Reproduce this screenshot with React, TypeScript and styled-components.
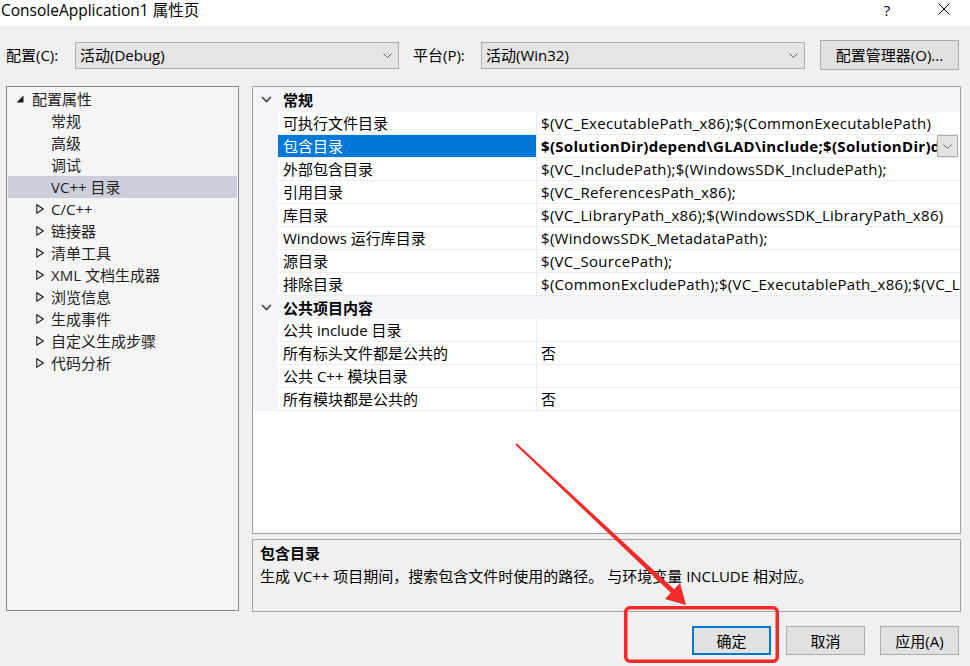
import React from 'react';
import styled, { createGlobalStyle } from 'styled-components';

const GlobalStyle = createGlobalStyle`
  html, body { margin: 0; padding: 0; }
  body {
    background: #f0f0f0;
    font-family: "Open Sans", "Noto Sans CJK SC", sans-serif;
    font-size: 15px;
    color: #000;
  }
  #root { width: 970px; height: 666px; overflow: hidden; }
`;

const Window = styled.div`
  position: relative;
  width: 970px;
  height: 666px;
  display: flex;
  flex-direction: column;
  background: #f0f0f0;
  overflow: hidden;
`;

const TitleBar = styled.div`
  height: 26px;
  flex-shrink: 0;
  background: #fff;
  display: flex;
  align-items: flex-start;
`;

const Title = styled.div`
  flex: 1;
  padding-left: 1px;
  font-size: 15.5px;
  line-height: 20px;
  white-space: nowrap;
`;

const Controls = styled.div`
  display: flex;
  gap: 11px;
  padding-right: 3px;
`;

const HelpGlyph = styled.div`
  width: 46px;
  text-align: center;
  font-size: 15px;
  line-height: 20px;
`;

const CloseGlyph = styled.div`
  width: 46px;
  height: 16px;
  display: flex;
  justify-content: center;
  align-items: center;
  padding-top: 1px;
`;

const ConfigRow = styled.div`
  display: flex;
  align-items: center;
  height: 30px;
  margin-top: 14px;
  padding-left: 6px;
`;

const FieldLabel = styled.div<{ $width: number; $gap?: number }>`
  width: ${p => p.$width}px;
  margin-left: ${p => p.$gap ?? 0}px;
  flex-shrink: 0;
  white-space: nowrap;
  line-height: 22px;
`;

const Combo = styled.div`
  width: 324px;
  height: 27px;
  box-sizing: border-box;
  border: 1px solid #adadad;
  background: #e5e5e5;
  display: flex;
  align-items: center;
  justify-content: space-between;
  padding: 0 6px 0 4px;
`;

const ComboText = styled.span`
  line-height: 22px;
`;

const PushButton = styled.div<{ $width: number; $height: number; $default?: boolean; $gap?: number }>`
  width: ${p => p.$width}px;
  height: ${p => p.$height}px;
  margin-left: ${p => p.$gap ?? 0}px;
  box-sizing: border-box;
  flex-shrink: 0;
  background: #e1e1e1;
  border: ${p => (p.$default ? '2px solid #0078d7' : '1px solid #adadad')};
  display: flex;
  align-items: center;
  justify-content: center;
  line-height: 22px;
  white-space: nowrap;
`;

const Main = styled.div`
  display: flex;
  margin-top: 16px;
  height: 526px;
  flex-shrink: 0;
`;

const Tree = styled.div`
  margin-left: 6px;
  width: 233px;
  height: 525px;
  box-sizing: border-box;
  border: 1px solid #828790;
  background: #f5f5f5;
  padding: 1px 1px 0 1px;
  color: #1e1e1e;
`;

const TreeRow = styled.div<{ $indent: number; $selected?: boolean }>`
  height: 22px;
  display: flex;
  align-items: center;
  padding-left: ${p => p.$indent}px;
  background: ${p => (p.$selected ? '#cccedb' : 'transparent')};
  white-space: nowrap;
`;

const TreeIcon = styled.span<{ $gap: number }>`
  display: inline-flex;
  width: 8px;
  margin-right: ${p => p.$gap}px;
  flex-shrink: 0;
`;

const TreeLabel = styled.span`
  line-height: 22px;
`;

const RightColumn = styled.div`
  margin-left: 13px;
  width: 709px;
  display: flex;
  flex-direction: column;
  gap: 5px;
`;

const Grid = styled.div`
  height: 448px;
  box-sizing: border-box;
  border: 1px solid #a0a0a0;
  background: #fff;
  overflow: hidden;
`;

const CategoryRow = styled.div<{ $first?: boolean }>`
  height: ${p => (p.$first ? 25 : 23)}px;
  display: grid;
  grid-template-columns: 25px 1fr;
  align-items: center;
  background: #f3f5f9;
`;

const CategoryChevron = styled.span`
  display: flex;
  justify-content: center;
  padding-left: 1px;
`;

const CategoryLabel = styled.span`
  padding-left: 5px;
  font-weight: 700;
  line-height: 22px;
`;

const PropRow = styled.div`
  height: 23px;
  display: grid;
  grid-template-columns: 25px 258px 1fr;
`;

const Gutter = styled.div`
  background: #f3f5f9;
`;

const NameCell = styled.div<{ $selected?: boolean }>`
  box-sizing: border-box;
  border-bottom: 1px solid #ededed;
  background: ${p => (p.$selected ? '#0078d7' : '#fff')};
  color: ${p => (p.$selected ? '#fff' : '#000')};
  padding-left: 5px;
  display: flex;
  align-items: center;
  white-space: nowrap;
  overflow: hidden;
  line-height: 22px;
`;

const ValueCell = styled.div<{ $bold?: boolean }>`
  box-sizing: border-box;
  border-bottom: 1px solid #ededed;
  border-left: 1px solid #ededed;
  display: flex;
  align-items: center;
  overflow: hidden;
  font-weight: ${p => (p.$bold ? 700 : 400)};
  min-width: 0;
`;

const ValueText = styled.span`
  flex: 1;
  min-width: 0;
  padding-left: 4px;
  white-space: nowrap;
  overflow: hidden;
  line-height: 22px;
  letter-spacing: 0.3px;
`;

const DropButton = styled.div`
  width: 21px;
  height: 22px;
  box-sizing: border-box;
  margin-right: 2px;
  flex-shrink: 0;
  background: #e3e3e3;
  border: 1px solid #adadad;
  display: flex;
  align-items: center;
  justify-content: center;
  align-self: flex-start;
`;

const Description = styled.div`
  height: 73px;
  box-sizing: border-box;
  border: 1px solid #a0a0a0;
  background: #f0f0f0;
  padding: 2px 7px 0 7px;
`;

const DescTitle = styled.div`
  font-weight: 700;
  line-height: 23px;
`;

const DescText = styled.div`
  line-height: 23px;
  white-space: nowrap;
`;

const ButtonRow = styled.div`
  display: flex;
  justify-content: flex-end;
  gap: 15px;
  margin-top: 14px;
  padding-right: 11px;
`;

const Annotation = styled.svg`
  position: absolute;
  left: 0;
  top: 0;
  width: 970px;
  height: 666px;
  pointer-events: none;
`;

const SmallChevron = () => (
  <svg width="9" height="5" viewBox="0 0 9 5">
    <polyline points="0.5,0.5 4.5,4.5 8.5,0.5" fill="none" stroke="#606060" strokeWidth="1" />
  </svg>
);

const CatChevron = () => (
  <svg width="11" height="7" viewBox="0 0 11 7">
    <polyline points="1,1 5.5,5.5 10,1" fill="none" stroke="#404040" strokeWidth="1.6" />
  </svg>
);

const ExpandedTri = () => (
  <svg width="8" height="8" viewBox="0 0 8 8">
    <polygon points="7.5,0.5 7.5,7.5 0.5,7.5" fill="#1e1e1e" />
  </svg>
);

const CollapsedTri = () => (
  <svg width="8" height="10" viewBox="0 0 8 10">
    <polygon points="0.8,0.8 7.2,5 0.8,9.2" fill="none" stroke="#1e1e1e" strokeWidth="1.1" />
  </svg>
);

type TreeItem = { label: string; kind: 'root' | 'leaf' | 'collapsed'; selected?: boolean };

const treeItems: TreeItem[] = [
  { label: '配置属性', kind: 'root' },
  { label: '常规', kind: 'leaf' },
  { label: '高级', kind: 'leaf' },
  { label: '调试', kind: 'leaf' },
  { label: 'VC++ 目录', kind: 'leaf', selected: true },
  { label: 'C/C++', kind: 'collapsed' },
  { label: '链接器', kind: 'collapsed' },
  { label: '清单工具', kind: 'collapsed' },
  { label: 'XML 文档生成器', kind: 'collapsed' },
  { label: '浏览信息', kind: 'collapsed' },
  { label: '生成事件', kind: 'collapsed' },
  { label: '自定义生成步骤', kind: 'collapsed' },
  { label: '代码分析', kind: 'collapsed' },
];

type Prop = { name: string; value: string; selected?: boolean };
type Category = { title: string; props: Prop[] };

const categories: Category[] = [
  {
    title: '常规',
    props: [
      { name: '可执行文件目录', value: '$(VC_ExecutablePath_x86);$(CommonExecutablePath)' },
      { name: '包含目录', value: '$(SolutionDir)depend\\GLAD\\include;$(SolutionDir)depend\\GLFW\\include;$(IncludePath)', selected: true },
      { name: '外部包含目录', value: '$(VC_IncludePath);$(WindowsSDK_IncludePath);' },
      { name: '引用目录', value: '$(VC_ReferencesPath_x86);' },
      { name: '库目录', value: '$(VC_LibraryPath_x86);$(WindowsSDK_LibraryPath_x86)' },
      { name: 'Windows 运行库目录', value: '$(WindowsSDK_MetadataPath);' },
      { name: '源目录', value: '$(VC_SourcePath);' },
      { name: '排除目录', value: '$(CommonExcludePath);$(VC_ExecutablePath_x86);$(VC_LibraryPath_x86)' },
    ],
  },
  {
    title: '公共项目内容',
    props: [
      { name: '公共 include 目录', value: '' },
      { name: '所有标头文件都是公共的', value: '否' },
      { name: '公共 C++ 模块目录', value: '' },
      { name: '所有模块都是公共的', value: '否' },
    ],
  },
];

export default function App() {
  return (
    <>
      <GlobalStyle />
      <Window>
        <TitleBar>
          <Title>ConsoleApplication1 属性页</Title>
          <Controls>
            <HelpGlyph>?</HelpGlyph>
            <CloseGlyph>
              <svg width="12" height="12" viewBox="0 0 12 12">
                <line x1="0.5" y1="0.5" x2="11.5" y2="11.5" stroke="#000" strokeWidth="1" />
                <line x1="11.5" y1="0.5" x2="0.5" y2="11.5" stroke="#000" strokeWidth="1" />
              </svg>
            </CloseGlyph>
          </Controls>
        </TitleBar>

        <ConfigRow>
          <FieldLabel $width={69}>配置(C):</FieldLabel>
          <Combo>
            <ComboText>活动(Debug)</ComboText>
            <SmallChevron />
          </Combo>
          <FieldLabel $width={68} $gap={14}>平台(P):</FieldLabel>
          <Combo>
            <ComboText>活动(Win32)</ComboText>
            <SmallChevron />
          </Combo>
          <PushButton $width={139} $height={30} $gap={15}>配置管理器(O)...</PushButton>
        </ConfigRow>

        <Main>
          <Tree>
            {treeItems.map(item => (
              <TreeRow
                key={item.label}
                $indent={item.kind === 'root' ? 8 : item.kind === 'collapsed' ? 28 : 43}
                $selected={item.selected}
              >
                {item.kind === 'root' && (
                  <TreeIcon $gap={8}>
                    <ExpandedTri />
                  </TreeIcon>
                )}
                {item.kind === 'collapsed' && (
                  <TreeIcon $gap={7}>
                    <CollapsedTri />
                  </TreeIcon>
                )}
                <TreeLabel>{item.label}</TreeLabel>
              </TreeRow>
            ))}
          </Tree>

          <RightColumn>
            <Grid>
              {categories.map((cat, ci) => (
                <React.Fragment key={cat.title}>
                  <CategoryRow $first={ci === 0}>
                    <CategoryChevron>
                      <CatChevron />
                    </CategoryChevron>
                    <CategoryLabel>{cat.title}</CategoryLabel>
                  </CategoryRow>
                  {cat.props.map(p => (
                    <PropRow key={p.name}>
                      <Gutter />
                      <NameCell $selected={p.selected}>{p.name}</NameCell>
                      <ValueCell $bold={p.selected}>
                        <ValueText>{p.value}</ValueText>
                        {p.selected && (
                          <DropButton>
                            <SmallChevron />
                          </DropButton>
                        )}
                      </ValueCell>
                    </PropRow>
                  ))}
                </React.Fragment>
              ))}
            </Grid>
            <Description>
              <DescTitle>包含目录</DescTitle>
              <DescText>生成 VC++ 项目期间，搜索包含文件时使用的路径。 与环境变量 INCLUDE 相对应。</DescText>
            </Description>
          </RightColumn>
        </Main>

        <ButtonRow>
          <PushButton $width={79} $height={29} $default>确定</PushButton>
          <PushButton $width={79} $height={29}>取消</PushButton>
          <PushButton $width={79} $height={29}>应用(A)</PushButton>
        </ButtonRow>

        <Annotation viewBox="0 0 970 666">
          <rect x="625.75" y="607.75" width="151.5" height="53.5" rx="4" ry="4" fill="none" stroke="#f42a2a" strokeWidth="3.5" />
          <polygon
            points="516.7,443.3 674.2,589.2 680,583 686,605 665,599 670.8,592.8 515.3,444.7"
            fill="#f42a2a"
          />
        </Annotation>
      </Window>
    </>
  );
}
